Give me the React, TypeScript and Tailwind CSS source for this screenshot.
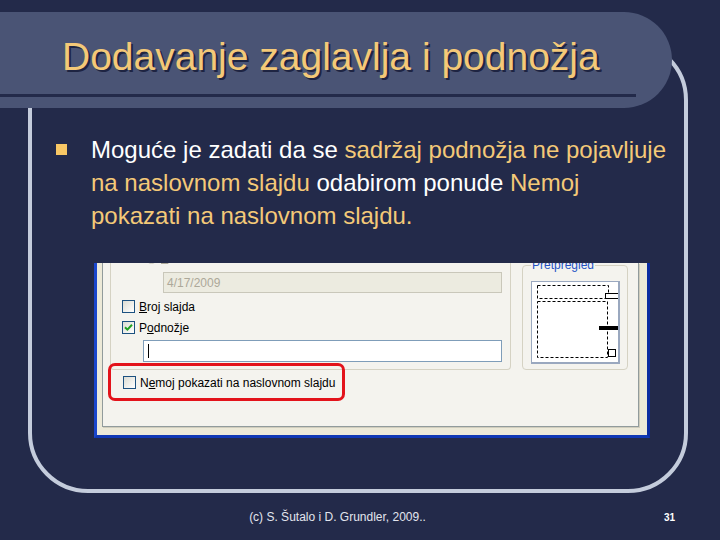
import React from 'react'

function XpCheck({ checked = false }: { checked?: boolean }) {
  return (
    <div className="w-[13px] h-[13px] shrink-0 border border-[#1c5180] bg-gradient-to-br from-[#dcdcd3] to-white flex items-center justify-center">
      {checked && (
        <svg width="9" height="9" viewBox="0 0 9 9">
          <path d="M1 4.2 L3.4 6.6 L8 1.8" fill="none" stroke="#21a121" strokeWidth="2" />
        </svg>
      )}
    </div>
  )
}

function Preview() {
  return (
    <svg width="86" height="80" viewBox="0 0 86 80">
      <rect x="5.5" y="3.5" width="71" height="13" fill="none" stroke="#000" strokeDasharray="3 2" />
      <rect x="5.5" y="19.5" width="70" height="56" fill="none" stroke="#000" strokeDasharray="3 2" />
      <rect x="73.5" y="11.5" width="14" height="5" fill="#fff" stroke="#000" />
      <rect x="67" y="44" width="21" height="4" fill="#000" />
      <rect x="76.5" y="67.5" width="7" height="7" fill="#fff" stroke="#000" />
    </svg>
  )
}

export default function App() {
  return (
    <div className="relative w-[720px] h-[540px] overflow-hidden bg-[#232a4a] font-['Liberation_Sans',Arial,sans-serif]">
      {/* rounded slide frame */}
      <div className="absolute left-[28px] top-[40px] w-[660px] h-[453px] rounded-[60px] border-4 border-[#c4ccdc]" />

      {/* title banner */}
      <div className="relative mt-[12px] h-[96px] w-[672px] rounded-r-full bg-[#4a5475] flex flex-col">
        <div className="pt-[25px] pl-[62px] text-[39px] leading-none text-[#f4c978] [text-shadow:2px_2px_0_#1e2442] whitespace-nowrap">
          Dodavanje zaglavlja i podnožja
        </div>
        <div className="mt-auto mb-[11px] h-[3px] w-[636px] bg-[#232a4a]" />
      </div>

      {/* bullet */}
      <div className="relative mt-[25px] flex">
        <div className="w-[91px] shrink-0 pl-[56px] pt-[11px]">
          <div className="w-[11px] h-[11px] bg-[#f8c765]" />
        </div>
        <p className="text-[24px] leading-[33px] text-white whitespace-nowrap">
          Moguće je zadati da se <span className="text-[#f4c978]">sadržaj podnožja ne pojavljuje</span>
          <br />
          <span className="text-[#f4c978]">na naslovnom slajdu</span> odabirom ponude <span className="text-[#f4c978]">Nemoj</span>
          <br />
          <span className="text-[#f4c978]">pokazati na naslovnom slajdu.</span>
        </p>
      </div>

      {/* dialog screenshot */}
      <div className="relative ml-[94px] mt-[31px] w-[556px] h-[175px] flex bg-[#ece9d8] border-l-[3px] border-l-[#1a46cc] border-r-[3px] border-r-[#0b2ca0] border-b-[3px] border-b-[#1038b4] pl-[5px] pr-[8px] pb-[8px] text-[12px] leading-none text-black">
        <div className="flex-1 flex overflow-hidden bg-[#f4f3ee] border-l border-r border-b border-[#919b9c] shadow-[1px_1px_0_#d0cdbd]">
          {/* left column */}
          <div className="w-[408px] shrink-0 flex flex-col">
            <div className="ml-[7px] w-[401px] -mt-[16px] pt-[4px] pb-[7px] border-l border-r border-b border-[#d5d2c3] rounded-b-[4px]">
              <div className="flex items-center ml-[34px] h-[13px] text-[#aca899]">
                <div className="w-[13px] h-[13px] rounded-full border border-[#cac8bb] bg-[#f4f3ee]" />
                <span className="ml-[3px]"><span className="underline">F</span>iksno</span>
              </div>
              <div className="mt-[8px] ml-[52px] w-[339px] h-[21px] border border-[#c9c7ba] bg-[#ecebe0] flex items-center pl-[3px] text-[#aca899]">
                4/17/2009
              </div>
              <div className="mt-[7px] ml-[11px] flex items-center gap-[4px]">
                <XpCheck />
                <span><span className="underline">B</span>roj slajda</span>
              </div>
              <div className="mt-[8px] ml-[11px] flex items-center gap-[4px]">
                <XpCheck checked />
                <span>P<span className="underline">o</span>dnožje</span>
              </div>
              <div className="mt-[6px] ml-[32px] w-[359px] h-[22px] border border-[#7f9db9] bg-white flex items-center pl-[4px]">
                <div className="w-px h-[14px] bg-black" />
              </div>
            </div>
            <div className="-mt-[7px] ml-[5px] w-[237px] h-[38px] border-[3px] border-[#e3131b] rounded-[7px] pl-[12px] pt-[10px] flex items-start gap-[4px]">
              <XpCheck />
              <span className="pt-px">N<span className="underline">e</span>moj pokazati na naslovnom slajdu</span>
            </div>
          </div>

          {/* preview group */}
          <fieldset className="ml-[11px] -mt-[4px] w-[106px] h-[111px] shrink-0 border border-[#d5d2c3] rounded-[4px] pb-[5px]">
            <legend className="ml-[8px] px-px text-[12px] leading-[12px] text-[#2452c4]">Pretpregled</legend>
            <div className="mt-[10px] ml-[8px] w-[89px] h-[83px] bg-white border border-[#9aa8bf] border-r-2 border-b-2">
              <Preview />
            </div>
          </fieldset>
        </div>
      </div>

      {/* footer */}
      <div className="relative mt-[72px] flex items-center h-[14px]">
        <div className="flex-1" />
        <div className="text-[12px] leading-[14px] text-[#e2e5ee] whitespace-nowrap">(c) S. Šutalo i D. Grundler, 2009..</div>
        <div className="flex-1 flex justify-end pr-[45px]">
          <span className="text-[10px] font-bold text-white">31</span>
        </div>
      </div>
    </div>
  )
}
